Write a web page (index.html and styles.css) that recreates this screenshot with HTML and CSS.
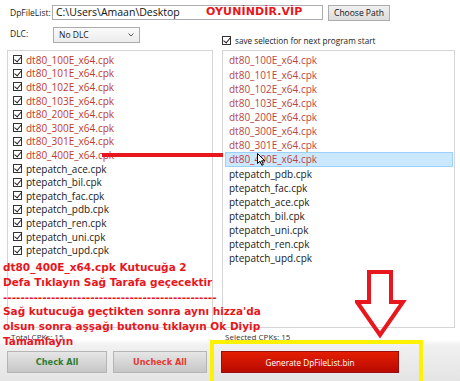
FILE: index.html
```html
<!DOCTYPE html>
<html>
<head>
<meta charset="utf-8">
<link rel="stylesheet" href="styles.css">
</head>
<body>
<div class="app">
  <div class="toprow">
    <span class="lbl">DpFileList:</span>
    <div class="path">C:\Users\Amaan\Desktop</div>
    <button class="choose">Choose Path</button>
  </div>
  <div class="row2">
    <div class="dlc">
      <span class="lbl">DLC:</span>
      <div class="select">No DLC<svg class="chev" width="6" height="4" viewBox="0 0 6 4"><path d="M0.5 0.5 L3 3 L5.5 0.5" fill="none" stroke="#555" stroke-width="1"/></svg></div>
    </div>
    <label class="save"><span class="cb"></span>save selection for next program start</label>
  </div>
  <div class="panels">
    <div class="panel left">
      <div class="item red"><span class="cb"></span>dt80_100E_x64.cpk</div>
      <div class="item red"><span class="cb"></span>dt80_101E_x64.cpk</div>
      <div class="item red"><span class="cb"></span>dt80_102E_x64.cpk</div>
      <div class="item red"><span class="cb"></span>dt80_103E_x64.cpk</div>
      <div class="item red"><span class="cb"></span>dt80_200E_x64.cpk</div>
      <div class="item red"><span class="cb"></span>dt80_300E_x64.cpk</div>
      <div class="item red"><span class="cb"></span>dt80_301E_x64.cpk</div>
      <div class="item red"><span class="cb"></span>dt80_400E_x64.cpk</div>
      <div class="item"><span class="cb"></span>ptepatch_ace.cpk</div>
      <div class="item"><span class="cb"></span>ptepatch_bil.cpk</div>
      <div class="item"><span class="cb"></span>ptepatch_fac.cpk</div>
      <div class="item"><span class="cb"></span>ptepatch_pdb.cpk</div>
      <div class="item"><span class="cb"></span>ptepatch_ren.cpk</div>
      <div class="item"><span class="cb"></span>ptepatch_uni.cpk</div>
      <div class="item"><span class="cb"></span>ptepatch_upd.cpk</div>
    </div>
    <div class="panel right">
      <div class="ritem red">dt80_100E_x64.cpk</div>
      <div class="ritem red">dt80_101E_x64.cpk</div>
      <div class="ritem red">dt80_102E_x64.cpk</div>
      <div class="ritem red">dt80_103E_x64.cpk</div>
      <div class="ritem red">dt80_200E_x64.cpk</div>
      <div class="ritem red">dt80_300E_x64.cpk</div>
      <div class="ritem red">dt80_301E_x64.cpk</div>
      <div class="ritem red sel">dt80_400E_x64.cpk</div>
      <div class="ritem">ptepatch_pdb.cpk</div>
      <div class="ritem">ptepatch_fac.cpk</div>
      <div class="ritem">ptepatch_ace.cpk</div>
      <div class="ritem">ptepatch_bil.cpk</div>
      <div class="ritem">ptepatch_uni.cpk</div>
      <div class="ritem">ptepatch_ren.cpk</div>
      <div class="ritem">ptepatch_upd.cpk</div>
    </div>
  </div>
  <div class="counts">
    <span>Total CPKs: 15</span>
    <span>Selected CPKs: 15</span>
  </div>
  <div class="buttons">
    <button class="btn check">Check All</button>
    <button class="btn uncheck">Uncheck All</button>
    <button class="btn gen">Generate DpFileList.bin</button>
  </div>

  <div class="brand">OYUNİNDİR.VİP</div>
  <div class="redline"></div>
  <svg class="cursor" width="9" height="13" viewBox="0 0 9 13"><path d="M0.5 0.5 L0.5 10.5 L3 8.3 L4.8 12.3 L6.3 11.6 L4.6 7.8 L7.8 7.8 Z" fill="#fff" stroke="#000" stroke-width="1"/></svg>
  <div class="note">dt80_400E_x64.cpk Kutucuğa 2<br>Defa Tıklayın Sağ Tarafa geçecektir<br>-------------------------------------------------<br>Sağ kutucuğa geçtikten sonra aynı hizza'da<br>olsun sonra aşşağı butonu tıklayın Ok Diyip<br>Tamamlayın</div>
  <svg class="arrow" width="60" height="72" viewBox="0 0 60 72"><polygon points="14,3 36,3 36,33 48,33 25,66 2,33 14,33" fill="none" stroke="#e8161d" stroke-width="4" stroke-linejoin="miter"/></svg>
  <div class="yellow"></div>
</div>
</body>
</html>
```

FILE: styles.css
```css
* { box-sizing: border-box; }
html, body { margin: 0; padding: 0; }
body {
  width: 460px;
  height: 381px;
  overflow: hidden;
  background: #fff;
  font-family: "Open Sans", "Noto Sans", sans-serif;
  font-size: 10px;
  color: #1a1a1a;
}
.app {
  position: relative;
  width: 460px;
  height: 381px;
  background: linear-gradient(#ffffff 0, #ffffff 340px, #f1f1f1 345px, #e4e4e4 381px);
  display: flex;
  flex-direction: column;
}
.toprow {
  display: flex;
  align-items: center;
  height: 17px;
  margin-top: 4px;
  padding-left: 10px;
}
.lbl { color: #222; font-size: 8.5px; }
.toprow .lbl { width: 42px; }
.path {
  width: 271px;
  height: 15px;
  border: 1px solid #abadb3;
  padding-left: 3px;
  line-height: 13px;
  font-size: 10.5px;
  color: #111;
  white-space: nowrap;
}
.choose {
  margin-left: 5px;
  width: 62px;
  height: 16px;
  padding: 0;
  border: 1px solid #acacac;
  background: linear-gradient(#f0f0f0, #dcdcdc);
  font-family: inherit;
  font-size: 8.5px;
  color: #111;
  line-height: 14px;
  white-space: nowrap;
}
.row2 {
  display: flex;
  margin-top: 6px;
  padding-left: 10px;
  height: 23px;
}
.dlc { display: flex; align-items: flex-start; width: 212px; }
.dlc .lbl { line-height: 14px; width: 43px; }
.select {
  width: 87px;
  height: 16px;
  border: 1px solid #acacac;
  background: linear-gradient(#fafafa, #ececec);
  padding-left: 5px;
  padding-right: 5px;
  line-height: 14px;
  font-size: 8.5px;
  display: flex;
  justify-content: space-between;
  align-items: center;
}
.save {
  display: flex;
  align-items: center;
  gap: 4px;
  font-size: 8.2px;
  color: #222;
  height: 12px;
  margin-top: 7px;
  white-space: nowrap;
}
.cb {
  position: relative;
  display: inline-block;
  flex: none;
  width: 9px;
  height: 9px;
  border: 1px solid #333;
  background: #fff;
}
.cb::after {
  content: "";
  position: absolute;
  left: 2px;
  top: -1px;
  width: 3px;
  height: 6px;
  border: solid #222;
  border-width: 0 1.4px 1.4px 0;
  transform: rotate(40deg);
}
.panels {
  display: flex;
  gap: 9px;
  padding-left: 7px;
  height: 278px;
}
.panel {
  border: 1px solid #d5d5d5;
  background: #fff;
}
.left { width: 206px; padding-top: 2px; padding-left: 5px; }
.right { width: 233px; padding-top: 2.4px; padding-left: 2px; padding-right: 1px; }
.item {
  display: flex;
  align-items: center;
  gap: 4px;
  height: 13.6px;
  white-space: nowrap;
}
.ritem {
  height: 14.15px;
  line-height: 13px;
  padding-left: 3px;
  border: 1px solid transparent;
  white-space: nowrap;
}
.red { color: #c0392b; }
.ritem.red { color: #b94545; }
.sel { background: #cce8ff; border-color: #99d1ff; }
.counts {
  display: flex;
  padding-left: 11px;
  margin-top: 3px;
  height: 12px;
  font-size: 8px;
  color: #333;
  line-height: 12px;
}
.counts span:first-child { width: 214px; }
.buttons {
  display: flex;
  padding-left: 7px;
  margin-top: 8px;
  gap: 6px;
}
.btn {
  height: 22px;
  padding: 0;
  border: 1px solid #b5b5b5;
  font-family: inherit;
}
.check, .uncheck {
  background: linear-gradient(#e6e6e6, #c6c6c6);
  font-weight: bold;
  font-family: "DejaVu Sans", sans-serif;
  font-size: 8.2px;
}
.check { width: 100px; color: #2e7d32; }
.uncheck { width: 94px; color: #e53935; }
.gen {
  width: 178px;
  margin-left: 8px;
  background: linear-gradient(#e41e02, #b80a00);
  border-color: #9c0d0d;
  color: #fff;
  font-size: 8.2px;
}
.brand {
  position: absolute;
  left: 206px;
  top: 5px;
  font-family: "DejaVu Sans", sans-serif;
  font-weight: bold;
  font-size: 11px;
  color: #e8161d;
  letter-spacing: 0.1px;
}
.redline {
  position: absolute;
  left: 102px;
  top: 153px;
  width: 121px;
  height: 4px;
  background: #e8161d;
}
.cursor { position: absolute; left: 257px; top: 153px; }
.note {
  position: absolute;
  left: 3px;
  top: 260px;
  font-family: "DejaVu Sans", sans-serif;
  font-weight: bold;
  font-size: 10.5px;
  line-height: 14.8px;
  color: #e8161d;
  white-space: nowrap;
}
.arrow { position: absolute; left: 355px; top: 269px; }
.yellow {
  position: absolute;
  left: 210px;
  top: 340px;
  width: 213px;
  height: 45px;
  border: 4px solid #fff200;
}
```
